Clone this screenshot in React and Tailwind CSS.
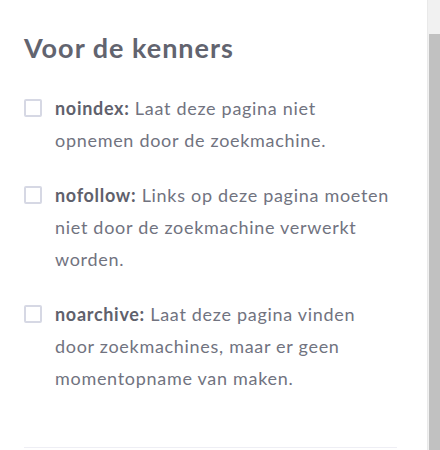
import React from "react";

const items = [
  { label: "noindex:", text: "Laat deze pagina niet opnemen door de zoekmachine." },
  { label: "nofollow:", text: "Links op deze pagina moeten niet door de zoekmachine verwerkt worden." },
  { label: "noarchive:", text: "Laat deze pagina vinden door zoekmachines, maar er geen momentopname van maken." },
];

export default function App() {
  return (
    <div className="flex h-[450px] w-[440px] overflow-hidden bg-white font-['Lato',sans-serif]">
      <div className="flex-1 pl-6 pr-[30px] pt-8">
        <h2 className="text-[27px] leading-8 font-bold tracking-[1px] text-[#62646f]">Voor de kenners</h2>
        <div className="mt-7 flex flex-col gap-[23px]">
          {items.map((it) => (
            <div key={it.label} className="flex items-start">
              <div className="mt-[7px] h-[18px] w-[18px] shrink-0 rounded-[2px] border-2 border-[#d6d8e4]" />
              <p className="ml-[13px] text-[18px] leading-8 tracking-[0.7px] text-[#71737f]">
                <span className="font-bold text-[#5f616c]">{it.label}</span> {it.text}
              </p>
            </div>
          ))}
        </div>
        <div className="mt-[53px] h-px bg-[#eeeef4]" />
      </div>
      <div className="flex w-[13px] flex-col border-l border-[#e9e9e9] bg-[#f1f1f1]">
        <div className="mt-[34px] ml-px flex-1 bg-[#c1c1c1]" />
      </div>
    </div>
  );
}
